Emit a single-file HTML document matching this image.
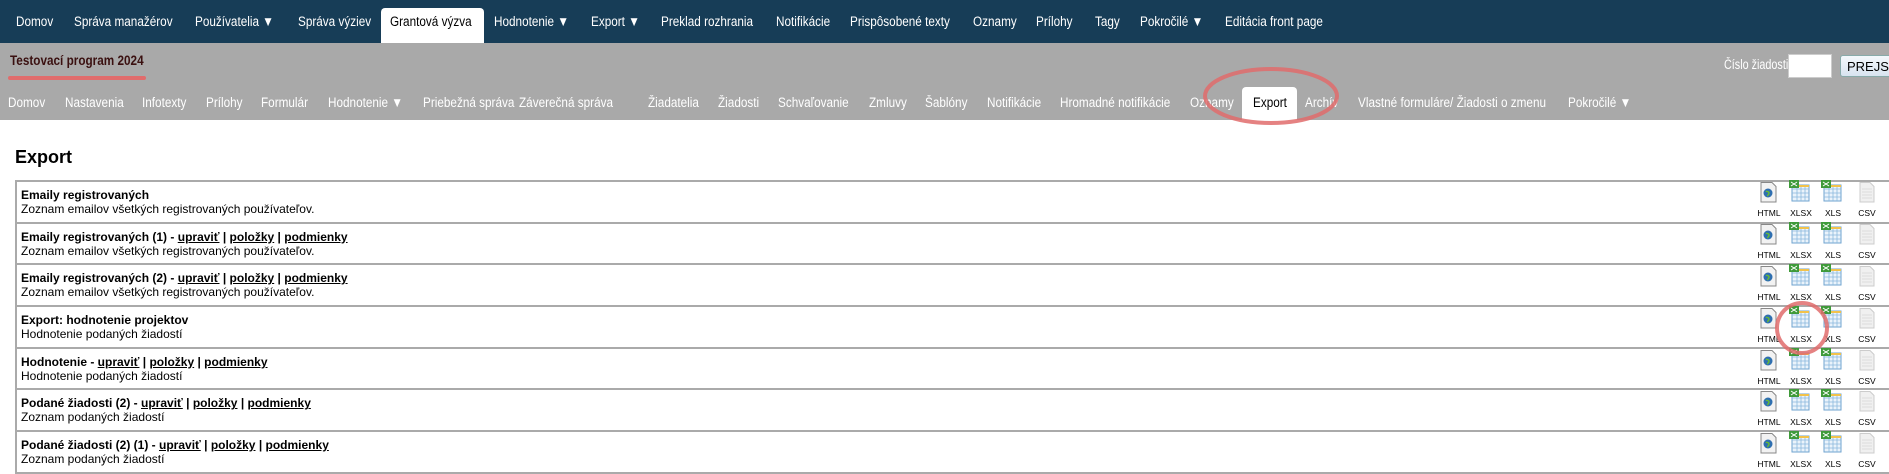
<!DOCTYPE html>
<html><head><meta charset="utf-8"><style>
*{margin:0;padding:0;box-sizing:border-box}
body{width:1889px;height:473px;overflow:hidden;background:#fff;font-family:"Liberation Sans",Arial,sans-serif;position:relative}
.top{position:absolute;left:0;top:0;width:1889px;height:43px;background:#173d57}
.top span,.sub span,.nar{position:absolute;font-size:13.5px;white-space:nowrap;transform:scaleX(.87);transform-origin:left top}
.top span{top:14px;color:#fff}
.ttab{position:absolute;left:381px;top:8px;width:103px;height:35px;background:#fff;border-radius:4px 4px 0 0}
.gray{position:absolute;left:0;top:43px;width:1889px;height:77px;background:#a9a9a9}
.sub span{top:95px;color:#fff}
.etab{position:absolute;left:1242px;top:87px;width:55px;height:33px;background:#fff;border-radius:4px 4px 0 0}
h1{position:absolute;left:15px;top:147px;font-size:18px;font-weight:bold;color:#000}
.tbl{position:absolute;left:15px;top:180px;width:1880px;border-top:2px solid #aaa;border-left:2px solid #aaa}
.row{height:41.7px;border-bottom:2px solid #aaa;position:relative;font-size:12px;color:#000}
.row .t{position:absolute;left:4px;top:6px;font-weight:bold;white-space:nowrap}
.row .d{position:absolute;left:4px;top:20px;white-space:nowrap}
.lb{position:absolute;top:26px;font-size:8.5px;color:#000;width:30px;text-align:center}
</style></head><body>
<div class="top">
<div class="ttab"></div>
<span style="left:16px">Domov</span>
<span style="left:74px">Správa manažérov</span>
<span style="left:195px">Používatelia ▼</span>
<span style="left:298px">Správa výziev</span>
<span style="left:390px;color:#000">Grantová výzva</span>
<span style="left:494px">Hodnotenie ▼</span>
<span style="left:591px">Export ▼</span>
<span style="left:661px">Preklad rozhrania</span>
<span style="left:776px">Notifikácie</span>
<span style="left:850px">Prispôsobené texty</span>
<span style="left:973px">Oznamy</span>
<span style="left:1036px">Prílohy</span>
<span style="left:1095px">Tagy</span>
<span style="left:1140px">Pokročilé ▼</span>
<span style="left:1225px">Editácia front page</span>
</div>
<div class="gray"></div>
<div class="nar" style="left:10px;top:53px;font-weight:bold;color:#3a1010">Testovací program 2024</div>
<div style="position:absolute;left:8px;top:76px;width:138px;height:4px;border-radius:2px;background:#e06c6c"></div>
<div class="nar" style="left:1724px;top:57px;color:#fff;transform:scaleX(.8)">Číslo žiadosti</div>
<div style="position:absolute;left:1788px;top:54px;width:44px;height:24px;background:#fff;border:1px solid #ccc"></div>
<div style="position:absolute;left:1840px;top:55px;width:60px;height:22px;background:linear-gradient(#f4f8fc,#d8e4f0);border:1px solid #8aa;border-radius:3px;font-size:13px;padding:3px 0 0 6px">PREJSŤ</div>
<div class="etab"></div>
<div class="sub">
<span style="left:8px">Domov</span>
<span style="left:65px">Nastavenia</span>
<span style="left:142px">Infotexty</span>
<span style="left:206px">Prílohy</span>
<span style="left:261px">Formulár</span>
<span style="left:328px">Hodnotenie ▼</span>
<span style="left:423px">Priebežná správa</span>
<span style="left:519px">Záverečná správa</span>
<span style="left:648px">Žiadatelia</span>
<span style="left:718px">Žiadosti</span>
<span style="left:778px">Schvaľovanie</span>
<span style="left:869px">Zmluvy</span>
<span style="left:925px">Šablóny</span>
<span style="left:987px">Notifikácie</span>
<span style="left:1060px">Hromadné notifikácie</span>
<span style="left:1190px">Oznamy</span>
<span style="left:1253px;color:#000">Export</span>
<span style="left:1305px">Archív</span>
<span style="left:1358px">Vlastné formuláre/ Žiadosti o zmenu</span>
<span style="left:1568px">Pokročilé ▼</span>
</div>
<svg style="position:absolute;left:1200px;top:64px" width="140" height="64"><ellipse cx="71" cy="32" rx="66" ry="27" fill="none" stroke="#e06c6c" stroke-width="4" opacity="0.85"/></svg>
<h1>Export</h1>
<div class="tbl">
<div class="row"><div class="t">Emaily registrovaných</div><div class="d">Zoznam emailov všetkých registrovaných používateľov.</div></div>
<div class="row"><div class="t">Emaily registrovaných (1) - <u>upraviť</u> | <u>položky</u> | <u>podmienky</u></div><div class="d">Zoznam emailov všetkých registrovaných používateľov.</div></div>
<div class="row"><div class="t">Emaily registrovaných (2) - <u>upraviť</u> | <u>položky</u> | <u>podmienky</u></div><div class="d">Zoznam emailov všetkých registrovaných používateľov.</div></div>
<div class="row"><div class="t">Export: hodnotenie projektov</div><div class="d">Hodnotenie podaných žiadostí</div></div>
<div class="row"><div class="t">Hodnotenie - <u>upraviť</u> | <u>položky</u> | <u>podmienky</u></div><div class="d">Hodnotenie podaných žiadostí</div></div>
<div class="row"><div class="t">Podané žiadosti (2) - <u>upraviť</u> | <u>položky</u> | <u>podmienky</u></div><div class="d">Zoznam podaných žiadostí</div></div>
<div class="row"><div class="t">Podané žiadosti (2) (1) - <u>upraviť</u> | <u>položky</u> | <u>podmienky</u></div><div class="d">Zoznam podaných žiadostí</div></div>
</div>
<svg width="0" height="0" style="position:absolute"><defs>
<g id="h"><path d="M1 .5h11l4 4v15.5h-15z" fill="#f2f2f2" stroke="#888"/><circle cx="8" cy="11" r="4.5" fill="#2f6fb0"/><path d="M6 9c1 1 3 0 3 2s-2 2-1 3" stroke="#6b3" fill="none" stroke-width="1.5"/></g>
<g id="x"><rect x="3" y="5" width="17" height="16" fill="#eaf3fb" stroke="#6fa3cf"/><path d="M3 9h17M3 13h17M3 17h17M8 5v16M12 5v16M16 5v16" stroke="#8bb8dd" stroke-width=".8"/><rect x="3" y="5" width="17" height="2" fill="#f2c24b"/><rect x="0" y="0" width="10" height="8" fill="#3f9a3a"/><path d="M2 2l6 4M8 2l-6 4" stroke="#fff" stroke-width="1"/></g>
<g id="c"><path d="M1 .5h10l4 4v15.5h-14z" fill="#f0f0f0" stroke="#ccc"/><path d="M3 7h10M3 10h10M3 13h10M3 16h10" stroke="#ddd"/></g>
</defs></svg>
<div style="position:absolute;left:1757px;top:182px">
<svg style="position:absolute;left:3px;top:0" width="18" height="22"><use href="#h"/></svg><div class="lb" style="left:-3px">HTML</div>
<svg style="position:absolute;left:32px;top:-2px" width="22" height="22"><use href="#x"/></svg><div class="lb" style="left:29px">XLSX</div>
<svg style="position:absolute;left:64px;top:-2px" width="22" height="22"><use href="#x"/></svg><div class="lb" style="left:61px">XLS</div>
<svg style="position:absolute;left:102px;top:0" width="18" height="22"><use href="#c"/></svg><div class="lb" style="left:95px">CSV</div>
</div>
<div style="position:absolute;left:1757px;top:224px">
<svg style="position:absolute;left:3px;top:0" width="18" height="22"><use href="#h"/></svg><div class="lb" style="left:-3px">HTML</div>
<svg style="position:absolute;left:32px;top:-2px" width="22" height="22"><use href="#x"/></svg><div class="lb" style="left:29px">XLSX</div>
<svg style="position:absolute;left:64px;top:-2px" width="22" height="22"><use href="#x"/></svg><div class="lb" style="left:61px">XLS</div>
<svg style="position:absolute;left:102px;top:0" width="18" height="22"><use href="#c"/></svg><div class="lb" style="left:95px">CSV</div>
</div>
<div style="position:absolute;left:1757px;top:266px">
<svg style="position:absolute;left:3px;top:0" width="18" height="22"><use href="#h"/></svg><div class="lb" style="left:-3px">HTML</div>
<svg style="position:absolute;left:32px;top:-2px" width="22" height="22"><use href="#x"/></svg><div class="lb" style="left:29px">XLSX</div>
<svg style="position:absolute;left:64px;top:-2px" width="22" height="22"><use href="#x"/></svg><div class="lb" style="left:61px">XLS</div>
<svg style="position:absolute;left:102px;top:0" width="18" height="22"><use href="#c"/></svg><div class="lb" style="left:95px">CSV</div>
</div>
<div style="position:absolute;left:1757px;top:308px">
<svg style="position:absolute;left:3px;top:0" width="18" height="22"><use href="#h"/></svg><div class="lb" style="left:-3px">HTML</div>
<svg style="position:absolute;left:32px;top:-2px" width="22" height="22"><use href="#x"/></svg><div class="lb" style="left:29px">XLSX</div>
<svg style="position:absolute;left:64px;top:-2px" width="22" height="22"><use href="#x"/></svg><div class="lb" style="left:61px">XLS</div>
<svg style="position:absolute;left:102px;top:0" width="18" height="22"><use href="#c"/></svg><div class="lb" style="left:95px">CSV</div>
</div>
<div style="position:absolute;left:1757px;top:350px">
<svg style="position:absolute;left:3px;top:0" width="18" height="22"><use href="#h"/></svg><div class="lb" style="left:-3px">HTML</div>
<svg style="position:absolute;left:32px;top:-2px" width="22" height="22"><use href="#x"/></svg><div class="lb" style="left:29px">XLSX</div>
<svg style="position:absolute;left:64px;top:-2px" width="22" height="22"><use href="#x"/></svg><div class="lb" style="left:61px">XLS</div>
<svg style="position:absolute;left:102px;top:0" width="18" height="22"><use href="#c"/></svg><div class="lb" style="left:95px">CSV</div>
</div>
<div style="position:absolute;left:1757px;top:391px">
<svg style="position:absolute;left:3px;top:0" width="18" height="22"><use href="#h"/></svg><div class="lb" style="left:-3px">HTML</div>
<svg style="position:absolute;left:32px;top:-2px" width="22" height="22"><use href="#x"/></svg><div class="lb" style="left:29px">XLSX</div>
<svg style="position:absolute;left:64px;top:-2px" width="22" height="22"><use href="#x"/></svg><div class="lb" style="left:61px">XLS</div>
<svg style="position:absolute;left:102px;top:0" width="18" height="22"><use href="#c"/></svg><div class="lb" style="left:95px">CSV</div>
</div>
<div style="position:absolute;left:1757px;top:433px">
<svg style="position:absolute;left:3px;top:0" width="18" height="22"><use href="#h"/></svg><div class="lb" style="left:-3px">HTML</div>
<svg style="position:absolute;left:32px;top:-2px" width="22" height="22"><use href="#x"/></svg><div class="lb" style="left:29px">XLSX</div>
<svg style="position:absolute;left:64px;top:-2px" width="22" height="22"><use href="#x"/></svg><div class="lb" style="left:61px">XLS</div>
<svg style="position:absolute;left:102px;top:0" width="18" height="22"><use href="#c"/></svg><div class="lb" style="left:95px">CSV</div>
</div>
<svg style="position:absolute;left:1772px;top:298px" width="60" height="60"><circle cx="30" cy="30" r="25" fill="none" stroke="#e06c6c" stroke-width="4" opacity="0.85"/></svg>
</body></html>
